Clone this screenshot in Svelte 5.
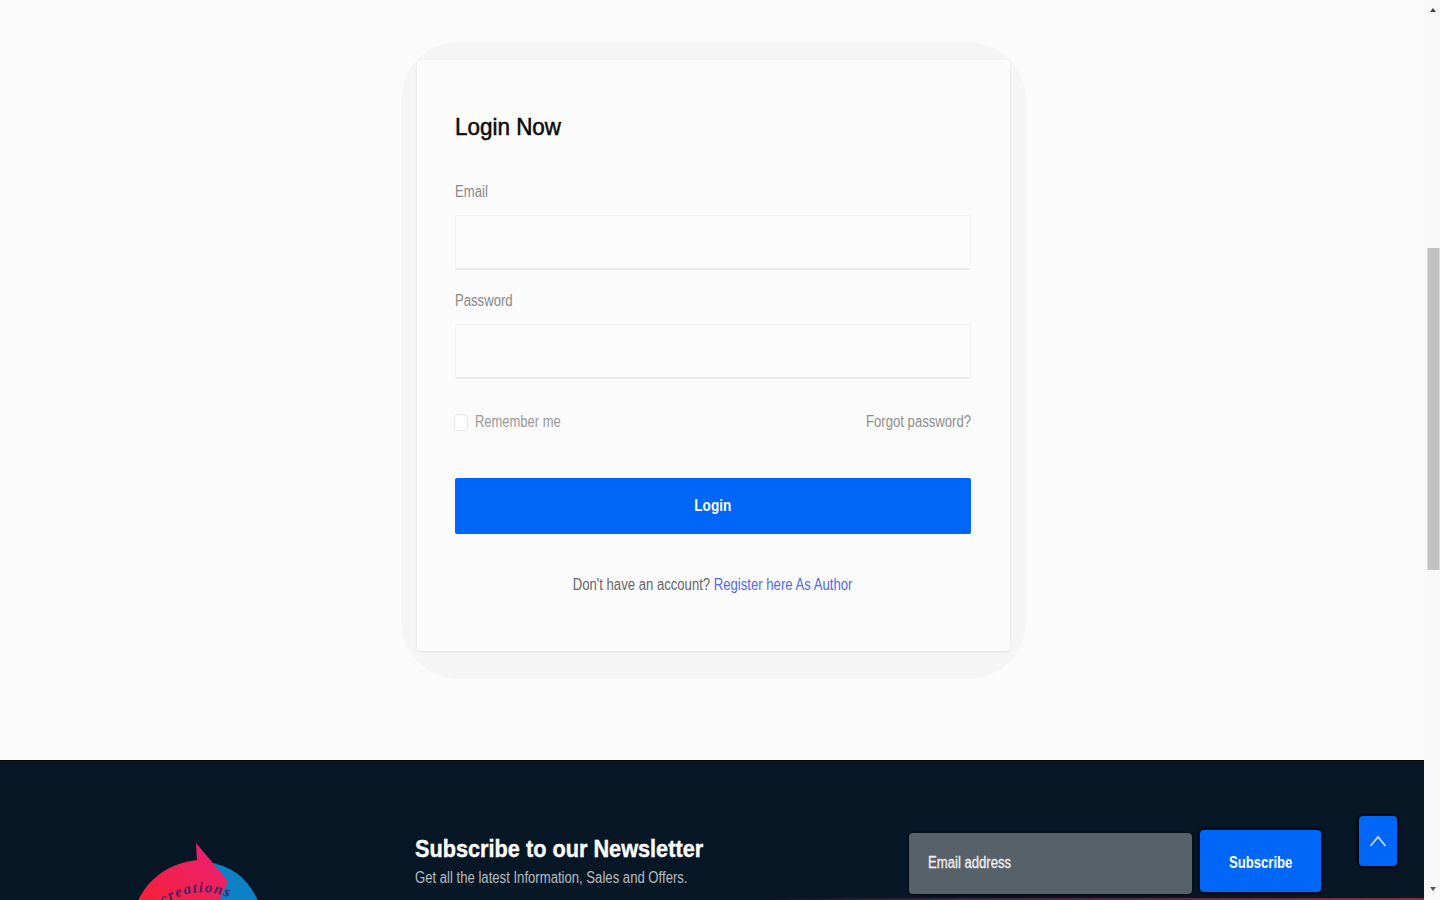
<script>
  let email = $state('');
  let password = $state('');
  let remember = $state(false);
  let newsletter = $state('');
</script>

<div class="window">
  <div class="page">
    <main>
      <div class="halo">
        <form class="card" onsubmit={(e) => e.preventDefault()}>
          <h1><span class="t title">Login Now</span></h1>
          <label class="first" for="email"><span class="t">Email</span></label>
          <input class="field one" id="email" type="text" bind:value={email} />
          <label class="second" for="password"><span class="t">Password</span></label>
          <input class="field two" id="password" type="password" bind:value={password} />
          <div class="options">
            <label class="remember">
              <input type="checkbox" bind:checked={remember} />
              <span class="t remember-text">Remember me</span>
            </label>
            <a class="t forgot" href="#forgot">Forgot password?</a>
          </div>
          <button class="login" type="submit"><span class="t login-text">Login</span></button>
          <p class="register"><span class="t">Don't have an account? <a href="#register">Register here As Author</a></span></p>
        </form>
      </div>
    </main>

    <footer>
      <div class="logo">
        <svg width="126" height="60" viewBox="0 0 126 60" aria-hidden="true">
          <defs>
            <linearGradient id="red" x1="0" y1="1" x2="1" y2="0">
              <stop offset="0" stop-color="#f52136" />
              <stop offset="1" stop-color="#ea207c" />
            </linearGradient>
            <path id="arc" d="M26 64Q66 37 112 67" />
          </defs>
          <path d="M68 21Q106 25 121 60H75Z" fill="#0d80c6" />
          <path d="M1 60C11 38 32 22 60 19L59 2L91 40L82 60Z" fill="url(#red)" />
          <text class="mark"><textPath href="#arc">creations</textPath></text>
        </svg>
      </div>
      <div class="news">
        <h2><span class="t">Subscribe to our Newsletter</span></h2>
        <p><span class="t">Get all the latest Information, Sales and Offers.</span></p>
      </div>
      <div class="signup">
        <div class="address">
          <input type="text" aria-label="Newsletter email" bind:value={newsletter} />
          {#if !newsletter}<span class="t hint">Email address</span>{/if}
        </div>
        <button class="subscribe"><span class="t">Subscribe</span></button>
      </div>
      <button class="top" aria-label="Back to top">
        <svg width="18" height="14" viewBox="0 0 18 14"><path d="M1.5 12L9 3L16.5 12" fill="none" stroke="#c3d3ff" stroke-width="1.8" /></svg>
      </button>
      <div class="rule"></div>
    </footer>
  </div>

  <div class="scrollbar">
    <svg class="up" width="8" height="6" viewBox="0 0 8 6"><path d="M1 5L4 1L7 5Z" fill="#444" /></svg>
    <div class="thumb"></div>
    <svg class="down" width="8" height="6" viewBox="0 0 8 6"><path d="M1 1L4 5L7 1Z" fill="#555" /></svg>
  </div>
</div>

<style>
  :global(body) { overflow: hidden; background: #fbfbfb; }
  .window, .window * { box-sizing: border-box; }
  .window { display: flex; width: 1440px; height: 900px; font-family: "Liberation Sans", Arial, sans-serif; }
  .page { width: 1424px; height: 900px; display: flex; flex-direction: column; }
  main { height: 760px; padding: 42px 0 0 401px; background: #fbfbfb; }
  h1, h2, p { margin: 0; font-weight: 400; }
  button { border: 0; padding: 0; font-family: inherit; }
  input { margin: 0; appearance: none; outline: 0; }
  .t { display: inline-block; white-space: nowrap; transform: scaleX(.82); transform-origin: left center; }

  .halo { width: 625px; height: 637px; border-radius: 58px; background: #f5f5f5; padding: 18px 16px 28px; }
  .card { width: 593px; height: 591px; padding: 51px 39px 0 38px; background: #fbfbfb; border-radius: 4px; box-shadow: 0 1px 3px rgba(0, 0, 0, .08); display: flex; flex-direction: column; }
  h1 { height: 32px; font-size: 24px; line-height: 32px; color: #080808; -webkit-text-stroke: .5px #080808; }
  .title { transform: scaleX(.935); }
  .first, .second { height: 20px; font-size: 16px; line-height: 20px; color: #888; }
  .first { margin-top: 39px; }
  .second { margin-top: 21px; }
  .field { width: 516px; height: 55px; flex: none; background: #fcfcfc; border: 1px solid #f3f3f3; border-bottom: 2px solid #ebebeb; border-radius: 2px; padding: 0 16px; font-size: 16px; }
  .one { margin-top: 13px; }
  .two { margin-top: 13px; }
  .options { height: 22px; margin-top: 32px; display: flex; justify-content: space-between; align-items: center; font-size: 16px; line-height: 22px; color: #999; }
  .remember { display: flex; align-items: center; gap: 6px; }
  .remember input { width: 14px; height: 17px; margin-left: -1px; margin-right: 1px; border: 1px solid #e5e5e5; border-radius: 4px; background: #fff; }
  .remember-text { transform: scaleX(.81); }
  .forgot { color: #8e8e8e; text-decoration: none; transform: scaleX(.82); transform-origin: right center; }
  .login { height: 56px; margin-top: 45px; border-radius: 2px; background: #0066f7; color: #fff; font-size: 16px; font-weight: 700; flex: none; }
  .login-text { transform: scaleX(.85); transform-origin: center; }
  .register { margin-top: 40px; display: flex; justify-content: center; font-size: 16px; line-height: 22px; color: #666; }
  .register .t { transform-origin: center; }
  .register a { color: #5369e8; text-decoration: none; }

  footer { position: relative; height: 140px; display: flex; background: #071726; border-top: 1px solid #050a12; overflow: hidden; }
  .logo { width: 415px; padding: 80px 0 0 137px; }
  .logo svg { display: block; }
  .mark { font: italic 700 15px "Liberation Serif", serif; letter-spacing: 1.5px; fill: #3d246b; }
  .news { width: 494px; padding-top: 73px; }
  h2 { height: 30px; font-size: 24px; line-height: 30px; font-weight: 700; color: #fff; -webkit-text-stroke: .4px #fff; }
  h2 .t { transform: scaleX(.904); }
  .news p { height: 22px; margin-top: 3px; font-size: 16px; line-height: 22px; color: #b8bcc0; }
  .signup { display: flex; gap: 8px; padding-top: 69px; }
  .address { position: relative; width: 283px; height: 61px; margin-top: 3px; }
  .address input { width: 100%; height: 100%; border: 0; border-radius: 4px; background: #56616a; color: #fff; padding: 0 19px; font-size: 16px; box-shadow: 0 0 2px 1px #030b14; }
  .hint { position: absolute; left: 19px; top: 19px; font-size: 16px; line-height: 22px; color: #f0f0f0; -webkit-text-stroke: .3px #f0f0f0; pointer-events: none; }
  .subscribe { width: 121px; height: 62px; padding-top: 4px; border-radius: 4px; background: #0066f7; color: #fff; font-size: 16px; font-weight: 700; box-shadow: 0 0 2px 2px #030b16; }
  .subscribe .t { transform-origin: center; }
  .top { width: 38px; height: 50px; margin: 55px 0 0 38px; display: flex; align-items: center; justify-content: center; border-radius: 4px; background: #0066f7; box-shadow: 0 0 2px 2px #020812; }
  .rule { position: absolute; right: 0; bottom: 0; width: 664px; height: 2px; background: linear-gradient(90deg, #071726, #48203a 30%, #6d2b3b 70%, #8a2f3c); }

  .scrollbar { width: 16px; height: 900px; background: #f8f8f8; display: flex; flex-direction: column; align-items: flex-end; }
  .up { margin: 7px 3px 0 0; }
  .thumb { width: 13px; height: 322px; margin-top: 235px; background: #c1c1c1; border: solid #dadada; border-width: 0 1px; }
  .down { margin: 316px 3px 0 0; }
</style>
